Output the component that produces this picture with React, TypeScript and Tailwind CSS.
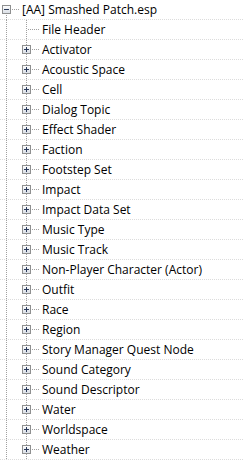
import React from 'react'

const ITEMS = [
  'Activator',
  'Acoustic Space',
  'Cell',
  'Dialog Topic',
  'Effect Shader',
  'Faction',
  'Footstep Set',
  'Impact',
  'Impact Data Set',
  'Music Type',
  'Music Track',
  'Non-Player Character (Actor)',
  'Outfit',
  'Race',
  'Region',
  'Story Manager Quest Node',
  'Sound Category',
  'Sound Descriptor',
  'Water',
  'Worldspace',
  'Weather',
]

const DOT = '#a0a0a0'
const SEP = '#dcdcdc'

function Box({ x, plus }: { x: number; plus: boolean }) {
  return (
    <g>
      <rect x={x + 0.5} y={5.5} width={8} height={8} fill="url(#boxg)" stroke="#8e8f8f" />
      <line x1={x + 2} y1={9.5} x2={x + 7} y2={9.5} stroke="#2a3a5a" />
      {plus && <line x1={x + 4.5} y1={7} x2={x + 4.5} y2={12} stroke="#2a3a5a" />}
    </g>
  )
}

// one gutter drawing per row: tree lines, expander box, row separator
function Gutter({ kind }: { kind: 'root' | 'leaf' | 'node' }) {
  const w = kind === 'root' ? 20 : 40
  return (
    <svg width={w} height={20} className="shrink-0 block" shapeRendering="crispEdges">
      <defs>
        <linearGradient id="boxg" x1="0" y1="0" x2="0" y2="1">
          <stop offset="0" stopColor="#ffffff" />
          <stop offset="1" stopColor="#d8dde4" />
        </linearGradient>
      </defs>
      <line x1={0} y1={19.5} x2={w} y2={19.5} stroke={SEP} strokeDasharray="1 1" />
      {kind === 'root' ? (
        <>
          <line x1={6.5} y1={15} x2={6.5} y2={20} stroke={DOT} strokeDasharray="1 1" />
          <line x1={12} y1={9.5} x2={20} y2={9.5} stroke={DOT} strokeDasharray="1 1" />
          <Box x={2} plus={false} />
        </>
      ) : (
        <>
          <line x1={6.5} y1={0} x2={6.5} y2={20} stroke={DOT} strokeDasharray="1 1" />
          <line x1={26.5} y1={0} x2={26.5} y2={20} stroke={DOT} strokeDasharray="1 1" />
          {kind === 'node' ? (
            <>
              <line x1={32} y1={9.5} x2={40} y2={9.5} stroke={DOT} strokeDasharray="1 1" />
              <Box x={22} plus />
            </>
          ) : (
            <line x1={28} y1={9.5} x2={40} y2={9.5} stroke={DOT} strokeDasharray="1 1" />
          )}
        </>
      )}
    </svg>
  )
}

function Row({ kind, label }: { kind: 'root' | 'leaf' | 'node'; label: string }) {
  return (
    <div className="flex h-[20px]">
      <Gutter kind={kind} />
      <div className="flex-1 h-[20px] border-b border-dotted border-[#dcdcdc] pl-[2px] leading-[19px] whitespace-nowrap overflow-hidden">
        {label}
      </div>
    </div>
  )
}

export default function App() {
  return (
    <div
      className="w-[243px] h-[460px] bg-white overflow-hidden text-[12px] text-black select-none"
      style={{ fontFamily: '"Open Sans", "Noto Sans", sans-serif' }}
    >
      <Row kind="root" label="[AA] Smashed Patch.esp" />
      <Row kind="leaf" label="File Header" />
      {ITEMS.map(it => (
        <Row key={it} kind="node" label={it} />
      ))}
    </div>
  )
}
